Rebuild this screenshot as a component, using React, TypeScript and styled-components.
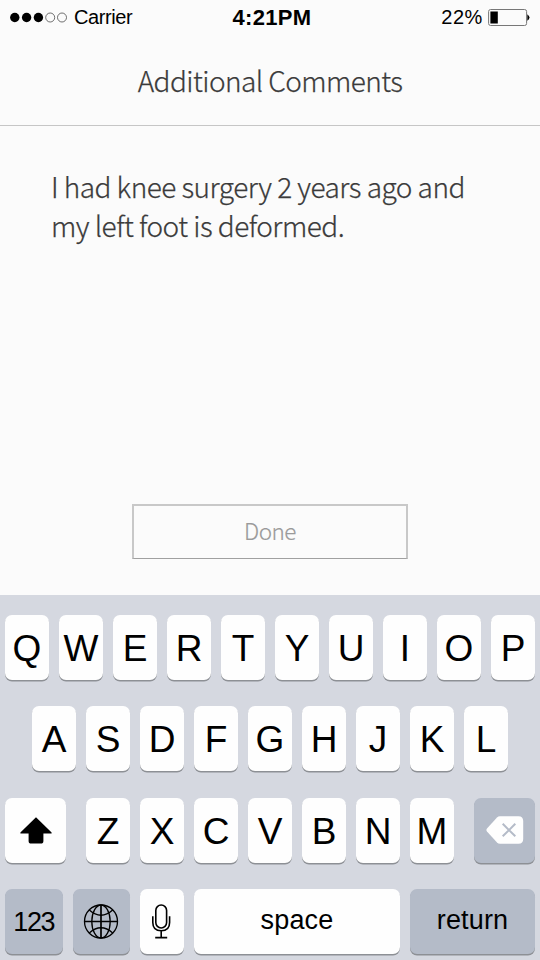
import React from "react";
import styled, { createGlobalStyle } from "styled-components";

const Global = createGlobalStyle`
  * { box-sizing: border-box; }
  body { margin: 0; background: #fbfbfb; }
`;

const sourceSans = `"Noto Sans CJK SC", "Noto Sans", sans-serif`;
const helvetica = `"Liberation Sans", Arial, sans-serif`;

const Screen = styled.main`
  width: 540px;
  height: 960px;
  display: flex;
  flex-direction: column;
  overflow: hidden;
  background: #fbfbfb;
  font-family: ${helvetica};
  color: #000;
`;

const StatusBar = styled.div`
  display: grid;
  grid-template-columns: 1fr auto 1fr;
  align-items: center;
  height: 35px;
  padding: 0 10px;
  font-size: 20px;
  line-height: 35px;
`;

const StatusGroup = styled.div<{ $end?: boolean }>`
  display: flex;
  align-items: center;
  justify-content: ${(p) => (p.$end ? "flex-end" : "flex-start")};
  gap: ${(p) => (p.$end ? "5px" : "6px")};
  white-space: nowrap;
`;

const Carrier = styled.span`
  letter-spacing: -0.4px;
`;

const Percent = styled.span`
  letter-spacing: 0.6px;
`;

const Clock = styled.span`
  font-weight: 700;
  font-size: 22px;
  letter-spacing: 0.3px;
  padding-left: 4px;
`;

const Header = styled.header`
  height: 91px;
  border-bottom: 1px solid #c6c6c6;
  display: flex;
  justify-content: center;
`;

const Title = styled.h1`
  margin: 0;
  padding-top: 25px;
  font: 300 28px/40px ${sourceSans};
  letter-spacing: -0.57px;
  -webkit-text-stroke: 0.25px #3b3b3b;
  color: #3b3b3b;
  white-space: nowrap;
`;

const Content = styled.section`
  height: 469px;
  display: flex;
  flex-direction: column;
  align-items: center;
  justify-content: space-between;
  padding: 41px 51px 36px;
`;

const Comment = styled.p`
  margin: 0;
  align-self: stretch;
  font: 300 28px/39px ${sourceSans};
  letter-spacing: -0.52px;
  -webkit-text-stroke: 0.25px #3b3b3b;
  color: #3b3b3b;
  white-space: nowrap;
`;

const DoneButton = styled.button`
  width: 276px;
  height: 55px;
  padding: 0 0 4px;
  border: 2px solid #c8c8c8;
  border-bottom: 1px solid #a0a0a0;
  background: transparent;
  font: 300 22.5px/34px ${sourceSans};
  letter-spacing: -0.5px;
  -webkit-text-stroke: 0.2px #9a9a9a;
  color: #9a9a9a;
`;

const Keyboard = styled.div`
  flex: 1;
  display: flex;
  flex-direction: column;
  gap: 26.3px;
  padding: 20px 5px 0;
  background: #d5d8e0;
`;

const KeyRow = styled.div<{ $spread?: boolean }>`
  display: flex;
  justify-content: ${(p) => (p.$spread ? "space-between" : "center")};
  gap: 10px;
`;

const LetterGroup = styled.div`
  display: flex;
  gap: 10px;
`;

const Key = styled.div<{ $width?: number; $dark?: boolean }>`
  display: flex;
  align-items: center;
  justify-content: center;
  flex: none;
  width: ${(p) => p.$width ?? 44}px;
  height: 65px;
  border-radius: 7px;
  background: ${(p) => (p.$dark ? "#b4bbc8" : "#fefefe")};
  box-shadow: 0 1.5px 0 #8d9095;
`;

const Letter = styled.span`
  padding-top: 2px;
  font-size: 37px;
  line-height: 1;
`;

const KeyLabel = styled.span<{ $numeric?: boolean }>`
  font-size: 27px;
  line-height: 1;
  letter-spacing: ${(p) => (p.$numeric ? "-1.3px" : "0.15px")};
  padding: ${(p) => (p.$numeric ? "2px 0 0 0" : "0 0 2px")};
`;

const Signal = () => (
  <svg width="58" height="12" viewBox="0 0 58 12">
    {[0, 1, 2, 3, 4].map((i) => (
      <circle
        key={i}
        cx={4.8 + i * 11.8}
        cy="5.5"
        r={i < 3 ? 4.7 : 4.5}
        fill={i < 3 ? "#000" : "none"}
        stroke={i < 3 ? "none" : "#333"}
        strokeWidth="0.7"
      />
    ))}
  </svg>
);

const Battery = () => (
  <svg width="42" height="18" viewBox="0 0 42 18">
    <rect x="0.6" y="0.5" width="38" height="16" rx="2" fill="none" stroke="#777" />
    <rect x="2.4" y="2.5" width="7.4" height="12" fill="#000" />
    <path d="M39.3 5.2Q43.7 8.5 39.3 11.8Z" fill="#000" />
  </svg>
);

const ShiftIcon = () => (
  <svg width="32" height="27" viewBox="0 0 32 27">
    <path d="M16 0.3 31.6 15.5V16.5H23.4V24Q23.4 26.6 20.8 26.6H11.2Q8.6 26.6 8.6 24V16.5H0.4V15.5Z" fill="#000" />
  </svg>
);

const DeleteIcon = () => (
  <svg width="38" height="28" viewBox="0 0 38 28">
    <path d="M14 0.3H32.5Q37.2 0.3 37.2 5V23Q37.2 27.7 32.5 27.7H14Q12.3 27.7 11 26.5L1 15.4Q-0.2 14 1 12.6L11 1.5Q12.3 0.3 14 0.3Z" fill="#fefefe" />
    <path d="m16.7 7.8 12.6 12.5M29.3 7.8 16.7 20.3" stroke="#b4bbc8" strokeWidth="2" />
  </svg>
);

const GlobeIcon = () => (
  <svg width="36" height="38" viewBox="0 0 36 38" fill="none" stroke="#000" strokeWidth="1.3">
    <g transform="translate(0 1.5)">
      <circle cx="18" cy="18" r="16.5" />
      <ellipse cx="18" cy="18" rx="9.2" ry="16.5" />
      <path d="M18 1.5V34.5M1.5 18H34.5" strokeWidth="1.7" />
      <path d="M6.3 6.5Q18 17 29.7 6.5M6.3 29.5Q18 19 29.7 29.5" />
    </g>
  </svg>
);

const MicIcon = () => (
  <svg width="20" height="35" viewBox="0 0 20 35" fill="none" stroke="#000" strokeWidth="1.6">
    <rect x="3.8" y="1" width="10.8" height="23" rx="5.4" />
    <path d="M0.8 12.3V18.5C0.8 24 4 26.8 9.2 26.8S17.6 24 17.6 18.5V12.3M9.2 27V33.4M3.2 33.6H15.2" />
  </svg>
);

const letterKeys = (letters: string) =>
  letters.split("").map((letter) => (
    <Key key={letter}>
      <Letter>{letter}</Letter>
    </Key>
  ));

export default function App() {
  return (
    <>
      <Global />
      <Screen>
        <StatusBar>
          <StatusGroup>
            <Signal />
            <Carrier>Carrier</Carrier>
          </StatusGroup>
          <Clock>4:21PM</Clock>
          <StatusGroup $end>
            <Percent>22%</Percent>
            <Battery />
          </StatusGroup>
        </StatusBar>
        <Header>
          <Title>Additional Comments</Title>
        </Header>
        <Content>
          <Comment>
            I had knee surgery 2 years ago and
            <br />
            my left foot is deformed.
          </Comment>
          <DoneButton>Done</DoneButton>
        </Content>
        <Keyboard>
          <KeyRow>{letterKeys("QWERTYUIOP")}</KeyRow>
          <KeyRow>{letterKeys("ASDFGHJKL")}</KeyRow>
          <KeyRow $spread>
            <Key $width={61}>
              <ShiftIcon />
            </Key>
            <LetterGroup>{letterKeys("ZXCVBNM")}</LetterGroup>
            <Key $width={61} $dark>
              <DeleteIcon />
            </Key>
          </KeyRow>
          <KeyRow $spread>
            <Key $width={57.5} $dark>
              <KeyLabel $numeric>123</KeyLabel>
            </Key>
            <Key $width={57.5} $dark>
              <GlobeIcon />
            </Key>
            <Key>
              <MicIcon />
            </Key>
            <Key $width={206}>
              <KeyLabel>space</KeyLabel>
            </Key>
            <Key $width={125} $dark>
              <KeyLabel>return</KeyLabel>
            </Key>
          </KeyRow>
        </Keyboard>
      </Screen>
    </>
  );
}
